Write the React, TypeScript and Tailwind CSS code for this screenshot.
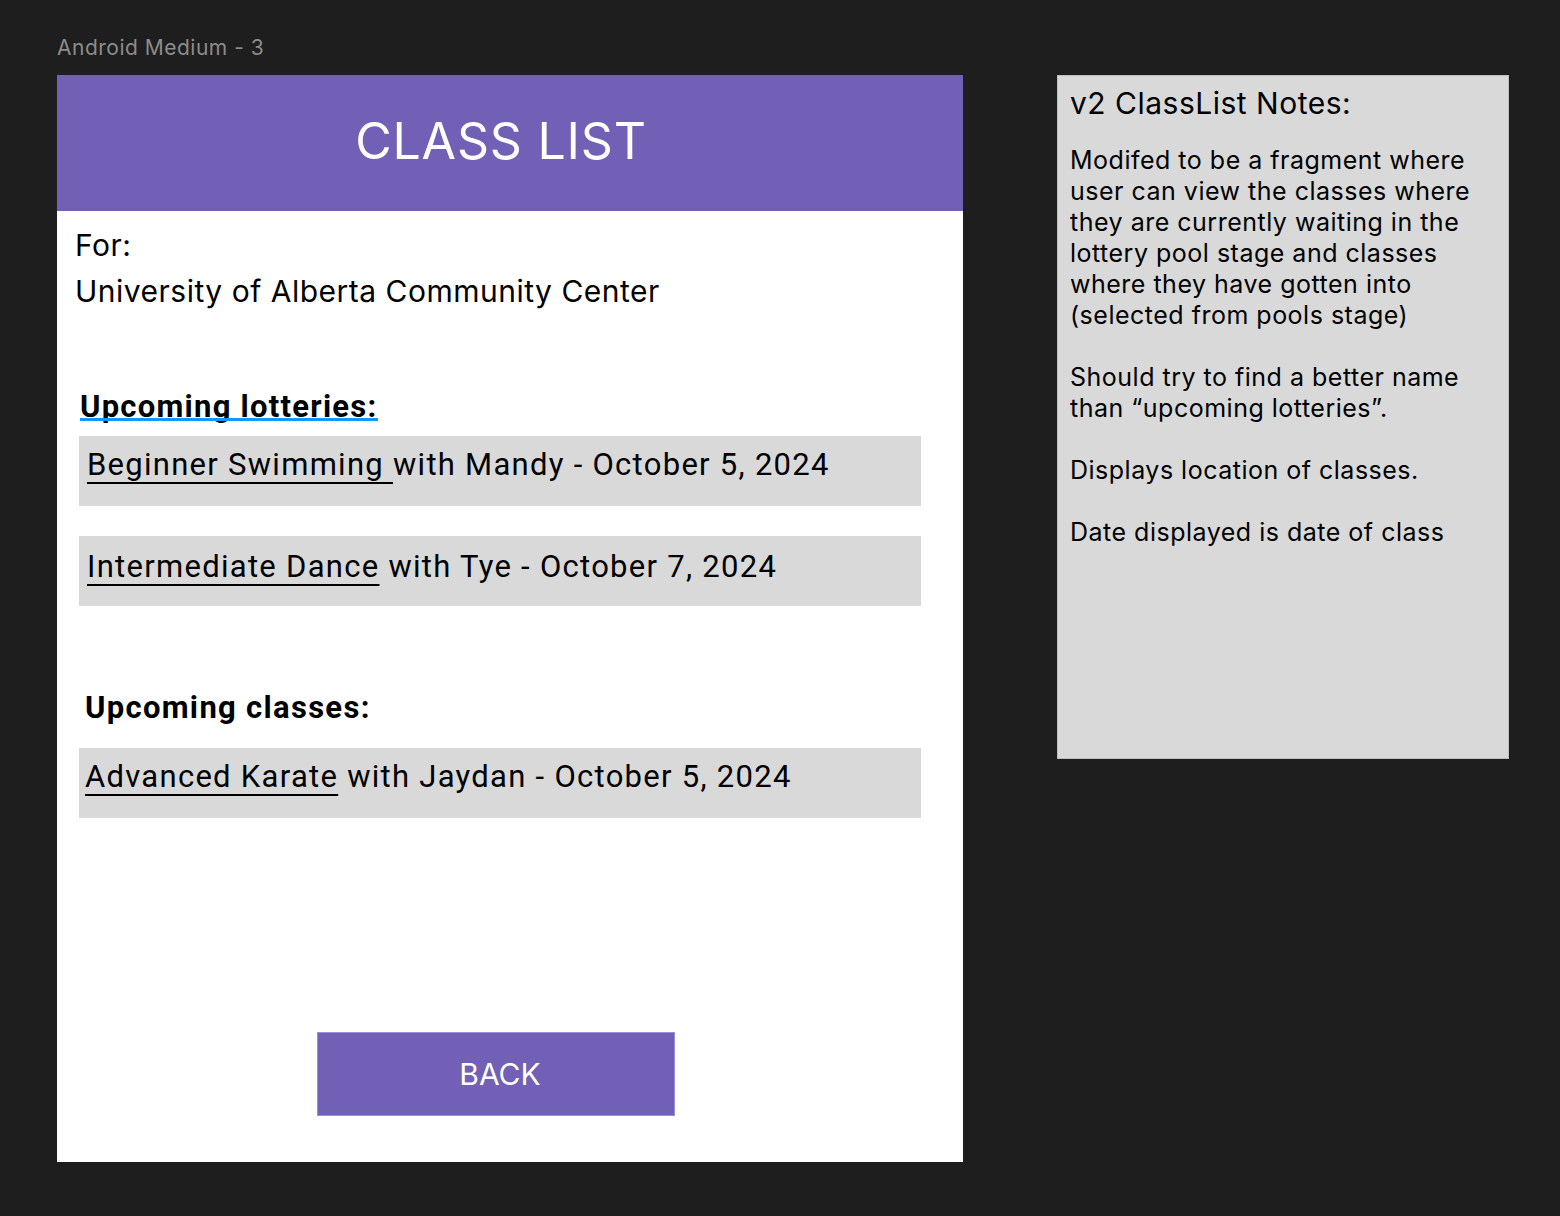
import React from "react";

const inter = { fontFamily: "Inter, 'Noto Sans', sans-serif" };

function Item({ link, rest, pad, pt }: { link: string; rest: string; pad: string; pt: string }) {
  return (
    <div className={`h-[70px] bg-[#d9d9d9] ${pad} ${pt}`}>
      <div className="font-['Roboto',sans-serif] text-[31px] leading-[38px] text-black tracking-[1.28px] whitespace-nowrap">
        <span className="underline decoration-[2px] underline-offset-[7px] [text-decoration-skip-ink:none]">{link}</span>
        {rest}
      </div>
    </div>
  );
}

export default function App() {
  return (
    <div className="w-[1560px] h-[1216px] bg-[#1e1e1e] relative overflow-hidden" style={inter}>
      <div className="pt-[34px] pl-[57px] flex gap-[94px]">
        <div className="flex flex-col">
          <div className="pt-[1px] text-[21px] leading-[26px] tracking-[0.5px] text-[#8c8c8c] font-['Inter',sans-serif] h-[41px]">Android Medium - 3</div>
          <div className="w-[906px] h-[1087px] bg-white flex flex-col">
            <div className="h-[136px] bg-[#725fb6] flex items-center justify-center pr-[18px] pb-[4px]">
              <span className="text-white text-[50px] leading-[60px] font-['Inter',sans-serif] tracking-[0.8px]">CLASS LIST</span>
            </div>
            <div className="pl-[18px] pt-[16px] text-[30px] leading-[36px] tracking-[0.5px] text-black font-['Inter',sans-serif]">
              <div className="h-[46px]">For:</div>
              <div>University of Alberta Community Center</div>
            </div>
            <div className="pl-[22px] pt-[80px] pr-[42px] flex flex-col">
              <div className="relative self-start ml-[1px] font-['Roboto',sans-serif] font-bold text-[31px] leading-[36px] tracking-[1.25px] text-black">
                Upcoming lotteries:
                <span className="absolute left-0 right-0 top-[29px] h-[3px] bg-[#0d99ff]" />
              </div>
              <div className="mt-[11px] flex flex-col gap-[30px]">
                <Item link="Beginner Swimming " rest="with Mandy - October 5, 2024" pad="pl-[8px]" pt="pt-[10px]" />
                <Item link="Intermediate Dance" rest=" with Tye - October 7, 2024" pad="pl-[8px]" pt="pt-[12px]" />
              </div>
              <div className="mt-[84px] ml-[6px] font-['Roboto',sans-serif] font-bold text-[31px] leading-[36px] tracking-[1.3px] text-black">
                Upcoming classes:
              </div>
              <div className="mt-[22px]">
                <Item link="Advanced Karate" rest=" with Jaydan - October 5, 2024" pad="pl-[6px]" pt="pt-[10px]" />
              </div>
              <div className="mt-[214px] self-start ml-[238px] w-[358px] h-[84px] bg-[#725fb6] border border-[#9d8fd6] flex items-center justify-center pl-[8px]">
                <span className="text-white text-[30px] leading-[36px] font-['Inter',sans-serif]">BACK</span>
              </div>
            </div>
          </div>
        </div>
        <div className="mt-[41px] w-[452px] h-[684px] bg-[#d9d9d9] border border-[#bdbdbd] px-[12px] pt-[9px] text-black font-['Inter',sans-serif]">
          <div className="text-[30px] leading-[36px] tracking-[0.5px]">v2 ClassList Notes:</div>
          <div className="mt-[24px] text-[25px] leading-[31px] tracking-[0.5px] whitespace-pre">
            {"Modifed to be a fragment where\nuser can view the classes where\nthey are currently waiting in the\nlottery pool stage and classes\nwhere they have gotten into\n(selected from pools stage)\n\nShould try to find a better name\nthan \u201cupcoming lotteries\u201d.\n\nDisplays location of classes.\n\nDate displayed is date of class"}
          </div>
        </div>
      </div>
    </div>
  );
}
